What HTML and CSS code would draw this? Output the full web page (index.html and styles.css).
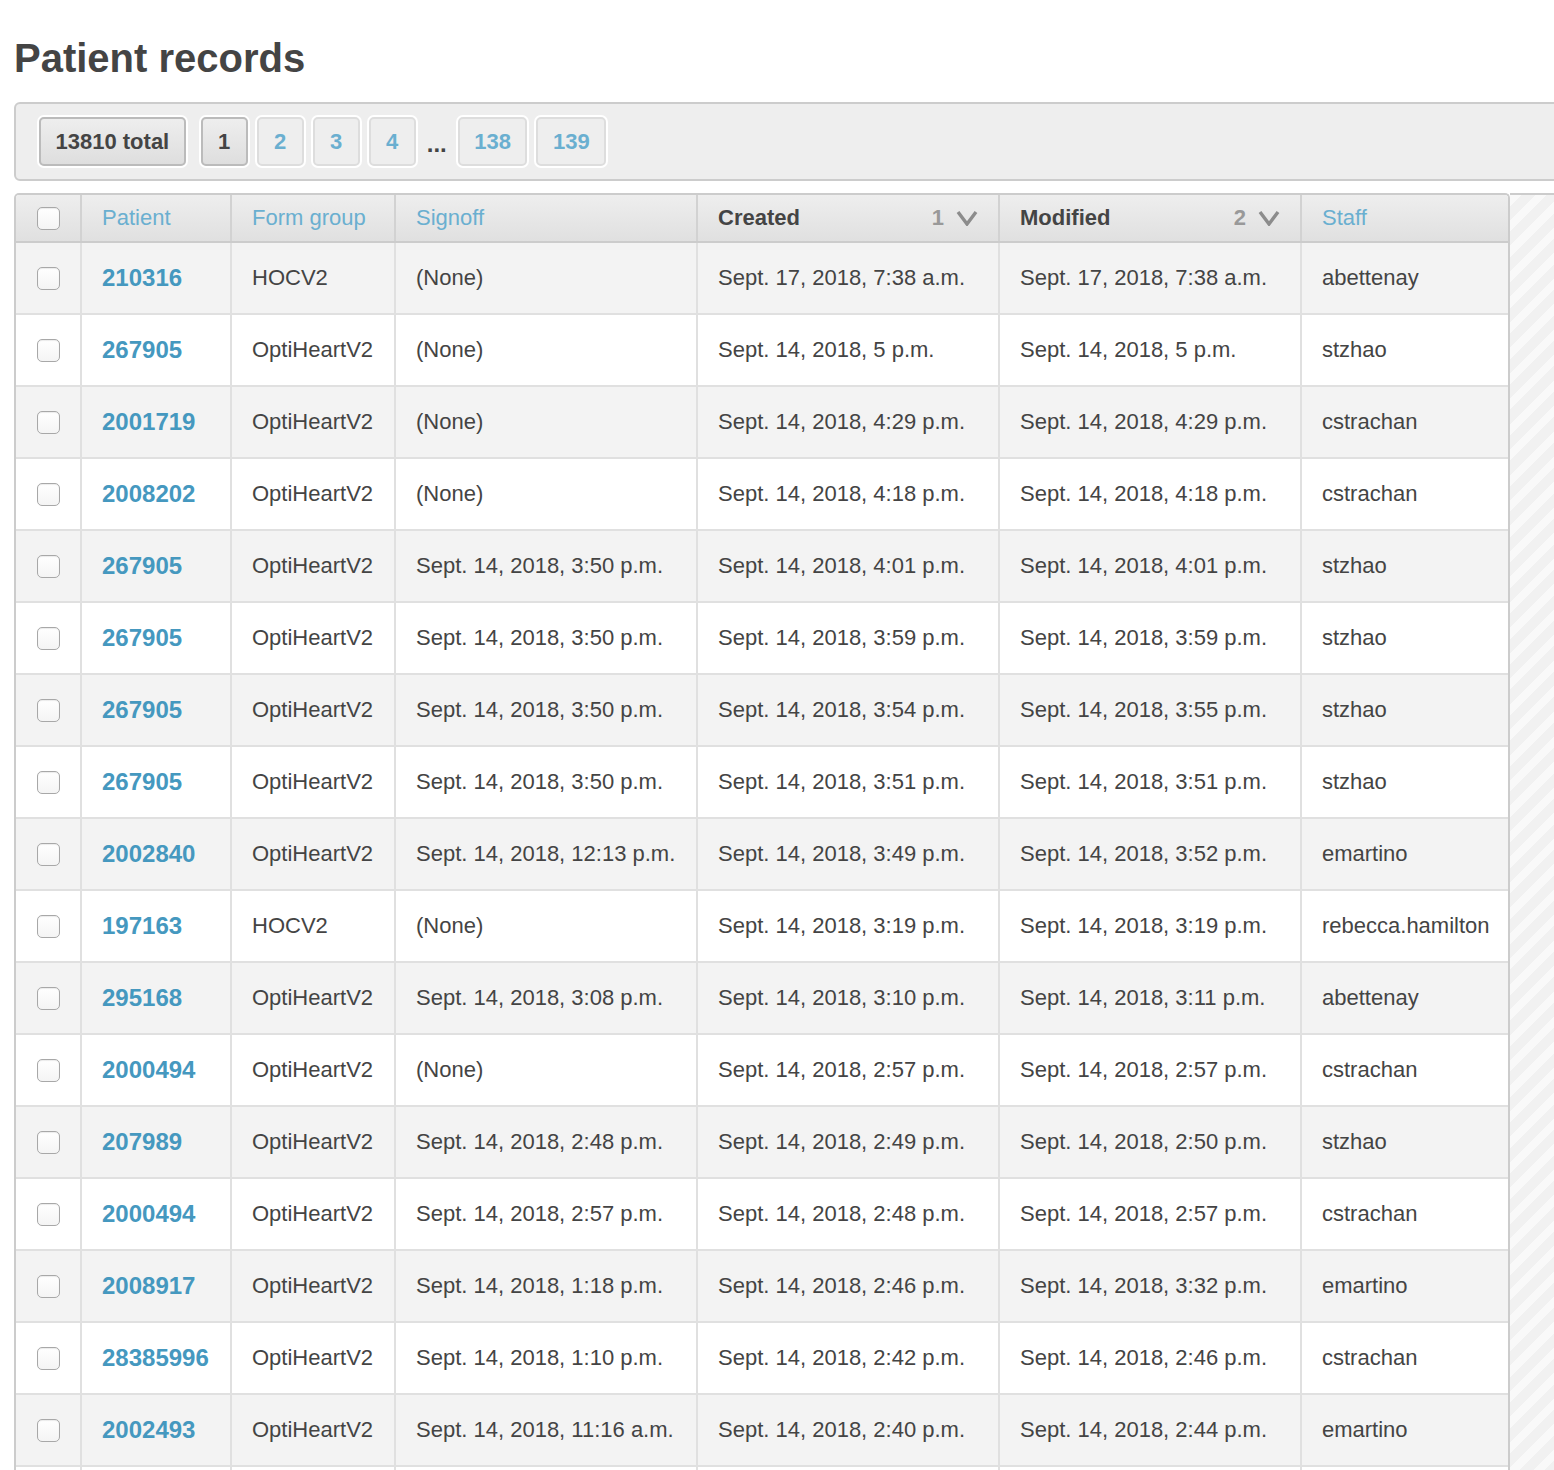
FILE: index.html
```html
<!DOCTYPE html>
<html lang="en">
<head>
<meta charset="utf-8">
<title>Patient records</title>
<link rel="stylesheet" href="styles.css">
</head>
<body>
<div class="page">
  <h1 class="title">Patient records</h1>

  <div class="pager">
    <span class="pbtn strong total">13810 total</span>
    <span class="pbtn strong">1</span>
    <a class="pbtn" href="#">2</a>
    <a class="pbtn" href="#">3</a>
    <a class="pbtn" href="#">4</a>
    <span class="dots">...</span>
    <a class="pbtn" href="#">138</a>
    <a class="pbtn" href="#">139</a>
  </div>

  <div class="results">
    <div class="grid">
      <div class="row head">
        <div class="cell chk"><span class="box"></span></div>
        <div class="cell"><a class="hlink" href="#">Patient</a></div>
        <div class="cell"><a class="hlink" href="#">Form group</a></div>
        <div class="cell"><a class="hlink" href="#">Signoff</a></div>
        <div class="cell sorted"><span>Created</span><span class="sort"><span class="num">1</span><svg width="22" height="16" viewBox="0 0 22 16"><polyline points="2,2 11,14 20,2" fill="none" stroke="#8c8c8c" stroke-width="3.4" stroke-linejoin="miter"/></svg></span></div>
        <div class="cell sorted"><span>Modified</span><span class="sort"><span class="num">2</span><svg width="22" height="16" viewBox="0 0 22 16"><polyline points="2,2 11,14 20,2" fill="none" stroke="#8c8c8c" stroke-width="3.4" stroke-linejoin="miter"/></svg></span></div>
        <div class="cell last"><a class="hlink" href="#">Staff</a></div>
      </div>

      <div class="row odd"><div class="cell chk"><span class="box"></span></div><div class="cell"><a class="plink" href="#">210316</a></div><div class="cell">HOCV2</div><div class="cell">(None)</div><div class="cell">Sept. 17, 2018, 7:38 a.m.</div><div class="cell">Sept. 17, 2018, 7:38 a.m.</div><div class="cell last">abettenay</div></div>
      <div class="row"><div class="cell chk"><span class="box"></span></div><div class="cell"><a class="plink" href="#">267905</a></div><div class="cell">OptiHeartV2</div><div class="cell">(None)</div><div class="cell">Sept. 14, 2018, 5 p.m.</div><div class="cell">Sept. 14, 2018, 5 p.m.</div><div class="cell last">stzhao</div></div>
      <div class="row odd"><div class="cell chk"><span class="box"></span></div><div class="cell"><a class="plink" href="#">2001719</a></div><div class="cell">OptiHeartV2</div><div class="cell">(None)</div><div class="cell">Sept. 14, 2018, 4:29 p.m.</div><div class="cell">Sept. 14, 2018, 4:29 p.m.</div><div class="cell last">cstrachan</div></div>
      <div class="row"><div class="cell chk"><span class="box"></span></div><div class="cell"><a class="plink" href="#">2008202</a></div><div class="cell">OptiHeartV2</div><div class="cell">(None)</div><div class="cell">Sept. 14, 2018, 4:18 p.m.</div><div class="cell">Sept. 14, 2018, 4:18 p.m.</div><div class="cell last">cstrachan</div></div>
      <div class="row odd"><div class="cell chk"><span class="box"></span></div><div class="cell"><a class="plink" href="#">267905</a></div><div class="cell">OptiHeartV2</div><div class="cell">Sept. 14, 2018, 3:50 p.m.</div><div class="cell">Sept. 14, 2018, 4:01 p.m.</div><div class="cell">Sept. 14, 2018, 4:01 p.m.</div><div class="cell last">stzhao</div></div>
      <div class="row"><div class="cell chk"><span class="box"></span></div><div class="cell"><a class="plink" href="#">267905</a></div><div class="cell">OptiHeartV2</div><div class="cell">Sept. 14, 2018, 3:50 p.m.</div><div class="cell">Sept. 14, 2018, 3:59 p.m.</div><div class="cell">Sept. 14, 2018, 3:59 p.m.</div><div class="cell last">stzhao</div></div>
      <div class="row odd"><div class="cell chk"><span class="box"></span></div><div class="cell"><a class="plink" href="#">267905</a></div><div class="cell">OptiHeartV2</div><div class="cell">Sept. 14, 2018, 3:50 p.m.</div><div class="cell">Sept. 14, 2018, 3:54 p.m.</div><div class="cell">Sept. 14, 2018, 3:55 p.m.</div><div class="cell last">stzhao</div></div>
      <div class="row"><div class="cell chk"><span class="box"></span></div><div class="cell"><a class="plink" href="#">267905</a></div><div class="cell">OptiHeartV2</div><div class="cell">Sept. 14, 2018, 3:50 p.m.</div><div class="cell">Sept. 14, 2018, 3:51 p.m.</div><div class="cell">Sept. 14, 2018, 3:51 p.m.</div><div class="cell last">stzhao</div></div>
      <div class="row odd"><div class="cell chk"><span class="box"></span></div><div class="cell"><a class="plink" href="#">2002840</a></div><div class="cell">OptiHeartV2</div><div class="cell">Sept. 14, 2018, 12:13 p.m.</div><div class="cell">Sept. 14, 2018, 3:49 p.m.</div><div class="cell">Sept. 14, 2018, 3:52 p.m.</div><div class="cell last">emartino</div></div>
      <div class="row"><div class="cell chk"><span class="box"></span></div><div class="cell"><a class="plink" href="#">197163</a></div><div class="cell">HOCV2</div><div class="cell">(None)</div><div class="cell">Sept. 14, 2018, 3:19 p.m.</div><div class="cell">Sept. 14, 2018, 3:19 p.m.</div><div class="cell last">rebecca.hamilton</div></div>
      <div class="row odd"><div class="cell chk"><span class="box"></span></div><div class="cell"><a class="plink" href="#">295168</a></div><div class="cell">OptiHeartV2</div><div class="cell">Sept. 14, 2018, 3:08 p.m.</div><div class="cell">Sept. 14, 2018, 3:10 p.m.</div><div class="cell">Sept. 14, 2018, 3:11 p.m.</div><div class="cell last">abettenay</div></div>
      <div class="row"><div class="cell chk"><span class="box"></span></div><div class="cell"><a class="plink" href="#">2000494</a></div><div class="cell">OptiHeartV2</div><div class="cell">(None)</div><div class="cell">Sept. 14, 2018, 2:57 p.m.</div><div class="cell">Sept. 14, 2018, 2:57 p.m.</div><div class="cell last">cstrachan</div></div>
      <div class="row odd"><div class="cell chk"><span class="box"></span></div><div class="cell"><a class="plink" href="#">207989</a></div><div class="cell">OptiHeartV2</div><div class="cell">Sept. 14, 2018, 2:48 p.m.</div><div class="cell">Sept. 14, 2018, 2:49 p.m.</div><div class="cell">Sept. 14, 2018, 2:50 p.m.</div><div class="cell last">stzhao</div></div>
      <div class="row"><div class="cell chk"><span class="box"></span></div><div class="cell"><a class="plink" href="#">2000494</a></div><div class="cell">OptiHeartV2</div><div class="cell">Sept. 14, 2018, 2:57 p.m.</div><div class="cell">Sept. 14, 2018, 2:48 p.m.</div><div class="cell">Sept. 14, 2018, 2:57 p.m.</div><div class="cell last">cstrachan</div></div>
      <div class="row odd"><div class="cell chk"><span class="box"></span></div><div class="cell"><a class="plink" href="#">2008917</a></div><div class="cell">OptiHeartV2</div><div class="cell">Sept. 14, 2018, 1:18 p.m.</div><div class="cell">Sept. 14, 2018, 2:46 p.m.</div><div class="cell">Sept. 14, 2018, 3:32 p.m.</div><div class="cell last">emartino</div></div>
      <div class="row"><div class="cell chk"><span class="box"></span></div><div class="cell"><a class="plink" href="#">28385996</a></div><div class="cell">OptiHeartV2</div><div class="cell">Sept. 14, 2018, 1:10 p.m.</div><div class="cell">Sept. 14, 2018, 2:42 p.m.</div><div class="cell">Sept. 14, 2018, 2:46 p.m.</div><div class="cell last">cstrachan</div></div>
      <div class="row odd"><div class="cell chk"><span class="box"></span></div><div class="cell"><a class="plink" href="#">2002493</a></div><div class="cell">OptiHeartV2</div><div class="cell">Sept. 14, 2018, 11:16 a.m.</div><div class="cell">Sept. 14, 2018, 2:40 p.m.</div><div class="cell">Sept. 14, 2018, 2:44 p.m.</div><div class="cell last">emartino</div></div>
      <div class="row"><div class="cell chk"></div><div class="cell"></div><div class="cell"></div><div class="cell"></div><div class="cell"></div><div class="cell"></div><div class="cell last"></div></div>
    </div>
    <div class="side"></div>
  </div>
</div>
</body>
</html>
```

FILE: styles.css
```css
html, body {
  margin: 0;
  padding: 0;
  background: #fff;
  overflow: hidden;
}

.page {
  height: 1470px;
  overflow: hidden;
  padding: 34px 0 0 14px;
  box-sizing: border-box;
  font-family: "Liberation Sans", Arial, Helvetica, sans-serif;
  font-size: 22px;
  color: #444;
}

.title {
  margin: 0 0 20px 0;
  font-size: 40px;
  line-height: 48px;
  font-weight: bold;
  color: #444;
}

/* paginator */
.pager {
  display: flex;
  align-items: center;
  gap: 5px;
  width: 1580px;
  box-sizing: border-box;
  padding: 11px 21px;
  background: #eeeeee;
  border: 2px solid #cccccc;
  border-radius: 6px;
}

.pbtn {
  display: flex;
  align-items: center;
  justify-content: center;
  box-sizing: border-box;
  height: 49px;
  min-width: 47px;
  margin: 2px;
  padding: 0 14.5px;
  border: 2px solid #dddddd;
  border-radius: 5px;
  box-shadow: 0 0 0 2px #ffffff;
  background: #eeeeee;
  color: #6aafd0;
  font-weight: bold;
  text-decoration: none;
  line-height: 1;
}

.pbtn.strong {
  border-color: #bbbbbb;
  background: linear-gradient(#eeeeee, #dedede);
  color: #444;
}

.pbtn.total {
  margin-right: 8px;
}

.dots {
  margin: 0 4px;
  font-size: 24px;
  font-weight: bold;
  color: #444;
  padding-top: 4px;
}

/* results */
.results {
  display: flex;
  margin-top: 12px;
  width: 1560px;
}

.grid {
  width: 1496px;
  flex: none;
  border: 2px solid #cccccc;
  border-bottom: 0;
  border-radius: 5px 5px 0 0;
  box-sizing: border-box;
  overflow: hidden;
}

.side {
  flex: 1;
  border-top: 2px solid #cccccc;
  background: repeating-linear-gradient(135deg, #f9f9f9 0 8px, #f1f1f1 8px 18px);
}

.row {
  display: grid;
  grid-template-columns: 66px 150px 164px 302px 302px 302px 204px;
  height: 72px;
  border-bottom: 2px solid #e0e0e0;
  box-sizing: border-box;
  background: #ffffff;
}

.row.odd {
  background: #f3f3f3;
}

.row.head {
  height: 48px;
  border-bottom: 2px solid #cccccc;
  background: linear-gradient(#eeeeee, #e0e0e0);
}

.cell {
  display: flex;
  align-items: center;
  padding: 0 20px;
  border-right: 2px solid #e0e0e0;
  white-space: nowrap;
  overflow: hidden;
}

.head .cell {
  border-right-color: #d2d2d2;
}

.cell.last {
  border-right: 0;
}

.cell.chk {
  padding: 0;
  justify-content: center;
}

.box {
  width: 23px;
  height: 23px;
  box-sizing: border-box;
  border: 1px solid #a8a8a8;
  border-radius: 5px;
  background: linear-gradient(#ffffff, #f4f4f4);
  box-shadow: inset 0 1px 1px rgba(0,0,0,0.08);
}

.hlink {
  color: #6aafd0;
  text-decoration: none;
}

.sorted {
  justify-content: space-between;
  font-weight: bold;
  color: #444;
}

.sort {
  display: flex;
  align-items: center;
  gap: 12px;
}

.num {
  color: #999999;
  font-weight: bold;
}

.plink {
  color: #4598bf;
  font-size: 24px;
  font-weight: bold;
  text-decoration: none;
}
```
